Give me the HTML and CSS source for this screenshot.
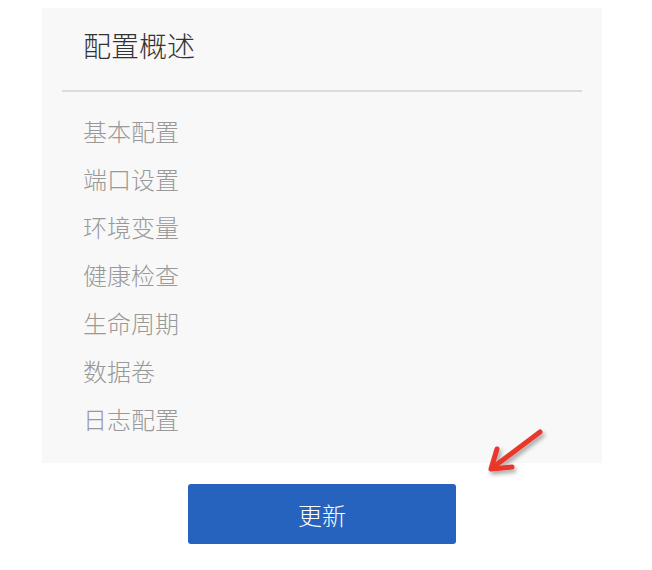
FILE: index.html
```html
<!doctype html>
<html lang="zh-CN">
<head>
  <meta charset="utf-8">
  <title>配置概述</title>
  <link rel="stylesheet" href="styles.css">
</head>
<body>
  <div class="page">
    <div class="panel">
      <h2 class="panel-title">配置概述</h2>
      <ul class="menu">
        <li>基本配置</li>
        <li>端口设置</li>
        <li>环境变量</li>
        <li>健康检查</li>
        <li>生命周期</li>
        <li>数据卷</li>
        <li>日志配置</li>
      </ul>
    </div>
    <div class="actions">
      <button class="update-btn">更新</button>
      <svg class="hint-arrow" width="70" height="60" viewBox="0 0 70 60">
        <defs>
          <filter id="shadow" x="-30%" y="-30%" width="160%" height="160%">
            <feDropShadow dx="2" dy="3" stdDeviation="2" flood-color="#000" flood-opacity="0.35"/>
          </filter>
        </defs>
        <g filter="url(#shadow)" stroke="#e8372b" stroke-width="5" stroke-linecap="round" stroke-linejoin="round" fill="none">
          <path d="M60 9 L12 45"/>
          <path d="M17 26 L11 46 L32 44"/>
        </g>
      </svg>
    </div>
  </div>
</body>
</html>
```
FILE: styles.css
```css
* {
  margin: 0;
  padding: 0;
  box-sizing: border-box;
}

body {
  font-family: "Noto Sans CJK SC", "Noto Sans", sans-serif;
  background: #fff;
}

.page {
  width: 560px;
  margin: 8px 0 0 42px;
}

.panel {
  background: #f8f8f8;
  padding: 0 20px 20px;
  height: 455px;
}

.panel-title {
  font-size: 28px;
  font-weight: 300;
  color: #333;
  padding: 17px 21px 0;
  height: 84px;
  border-bottom: 2px solid #dcdcdc;
}

.menu {
  list-style: none;
  padding: 15px 21px 0;
}

.menu li {
  font-size: 24px;
  font-weight: 300;
  line-height: 48px;
  color: #999;
}

.actions {
  position: relative;
  display: flex;
  justify-content: center;
  padding-top: 21px;
}

.update-btn {
  width: 268px;
  height: 60px;
  border: none;
  border-radius: 3px;
  background: #2563be;
  color: #fff;
  font-family: inherit;
  font-size: 24px;
  font-weight: 300;
  cursor: pointer;
}

.hint-arrow {
  position: absolute;
  left: 438px;
  top: -40px;
}
```
